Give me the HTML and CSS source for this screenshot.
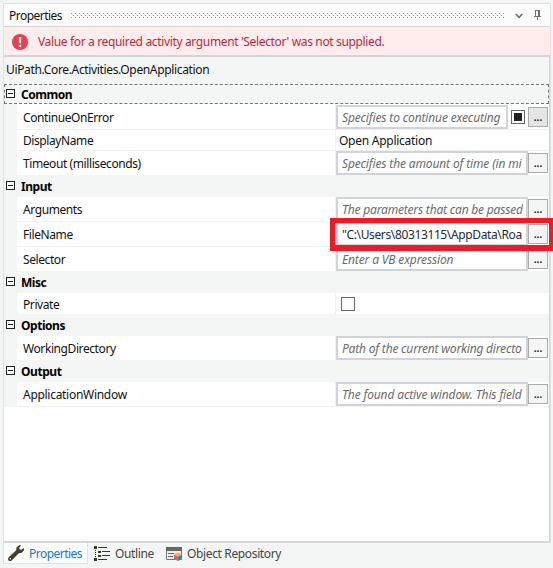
FILE: index.html
```
<!DOCTYPE html>
<html lang="en">
<head>
<meta charset="utf-8">
<title>Properties</title>
<link rel="stylesheet" href="styles.css">
</head>
<body>
<main class="panel">
  <header class="titlebar">
    <span class="title">Properties</span>
    <svg class="grip" width="164" height="5" shape-rendering="crispEdges"><defs><pattern id="dots" width="4" height="4" patternUnits="userSpaceOnUse"><path fill="#999" d="M0 0h1v1H0zM2 2h1v1H2z"/></pattern></defs><rect width="100%" height="5" fill="url(#dots)"/></svg>
    <svg class="chevron" width="8" height="6" viewBox="0 0 8 6"><path d="M.7 1 4 4.3 7.3 1" fill="none" stroke="#717171" stroke-width="1.7"/></svg>
    <svg class="pin" width="7" height="10" viewBox="0 0 7 10" shape-rendering="crispEdges"><path fill="#717171" d="M1 0h5v6h1v1H4v3H3V7H0V6h1zM2 1v5h2V1z" fill-rule="evenodd"/></svg>
  </header>
  <div class="error">
    <svg width="16" height="16" viewBox="0 0 16 16"><circle cx="8" cy="8" r="8" fill="#e9404d"/><path d="M6.7 3h2.6L9 9.2H7zM6.8 10.7h2.4v2.2H6.8z" fill="#fff"/></svg>
    <span class="error-text">Value for a required activity argument 'Selector' was not supplied.</span>
  </div>
  <div class="grid">
    <div class="type"><span>UiPath.Core.Activities.OpenApplication</span></div>
    <div class="group focused"><i class="toggle"></i><b>Common</b></div>
    <div class="row h26"><span class="name">ContinueOnError</span><div class="value"><div class="field"><em>Specifies to continue executing</em></div><i class="tristate"></i><button class="pressed">...</button></div></div>
    <div class="row h21"><span class="name">DisplayName</span><div class="value"><span class="plain">Open Application</span></div></div>
    <div class="row h24"><span class="name">Timeout (milliseconds)</span><div class="value"><div class="field"><em>Specifies the amount of time (in mi</em></div><button>...</button></div></div>
    <div class="group"><i class="toggle"></i><b>Input</b></div>
    <div class="row h25"><span class="name">Arguments</span><div class="value"><div class="field"><em class="tight">The parameters that can be passed</em></div><button>...</button></div></div>
    <div class="row h25 selected"><span class="name">FileName</span><div class="value"><div class="field"><span class="path">"C:\Users\80313115\AppData\Roa</span></div><button>...</button></div></div>
    <div class="row h24"><span class="name">Selector</span><div class="value"><div class="field"><em>Enter a VB expression</em></div><button>...</button></div></div>
    <div class="group"><i class="toggle"></i><b>Misc</b></div>
    <div class="row h21 last"><span class="name">Private</span><div class="value"><i class="check"></i></div></div>
    <div class="group"><i class="toggle"></i><b>Options</b></div>
    <div class="row h24"><span class="name">WorkingDirectory</span><div class="value"><div class="field"><em class="tight">Path of the current working directo</em></div><button>...</button></div></div>
    <div class="group"><i class="toggle"></i><b>Output</b></div>
    <div class="row h25"><span class="name wide">ApplicationWindow</span><div class="value"><div class="field"><em>The found active window. This field</em></div><button>...</button></div></div>
    <div class="empty"></div>
  </div>
</main>
<nav class="tabs">
  <div class="tab active">
    <svg width="16" height="16" viewBox="0 0 16 16"><path fill="#413e31" d="M11.6 0 8.5 2.2 8.2 5.200.7 12.200C-.3 13.500-.1 15 .9 15.700c.9.6 2.200.5 3-.4L10.800 8.300l3-.5L16 5.300V2.900l-2.700 1.900-1.800-.5-.3-1.700L13.300.600z"/><circle cx="2.300" cy="13.800" r=".7" fill="#fff"/></svg>
    <span>Properties</span>
  </div>
  <div class="tab outline">
    <svg width="16" height="15" viewBox="0 0 16 15" shape-rendering="crispEdges"><path fill="#37372e" d="M0 0h3v3H0zM4 1h9v1H4zM1 4h1v1H1zM1 6h1v1H1zM1 8h1v1H1zM1 10h1v1H1zM4 5h3v2H4zM8 5h8v1H8zM4 9h3v2H4zM8 9h8v1H8zM0 12h3v3H0zM4 13h9v1H4z"/></svg>
    <span>Outline</span>
  </div>
  <div class="tab repo">
    <svg width="16" height="14" viewBox="0 0 16 14"><path fill="#eee" stroke="#777" d="M.5 3.5h15v9H.5z"/><path fill="#666" d="M0 0h16v4H0z"/><path stroke="#666" d="M2 6.5h6M2 9.5h5"/><path fill="#ed6340" d="m8 7.500 4 2V14l-4-2z"/><path fill="#f4af65" d="m8 7.500 4-2 4 2-4 2z"/><path fill="#318bb6" d="m12 9.500 4-2V12l-4 2z"/></svg>
    <span>Object Repository</span>
  </div>
</nav>
</body>
</html>
```
FILE: styles.css
```
*, *::after { box-sizing: border-box; }
body {
  position: relative;
  margin: 0;
  width: 553px;
  height: 568px;
  overflow: hidden;
  padding: 3px 2px 0 3px;
  background: #f4f6f6;
  color: #111;
  font: 12px/16px "Noto Sans", sans-serif;
}
span, em, b { white-space: nowrap; }
svg { display: block; flex: none; }
.panel {
  width: 548px;
  height: 540px;
  border: 1px solid #dfe2e4;
  border-bottom: 2px solid #d5d7d8;
  display: flex;
  flex-direction: column;
}
.titlebar {
  height: 23px;
  flex: none;
  background: #fcfcfc;
  border-bottom: 1px solid #d3d5d7;
  display: flex;
  align-items: center;
  padding: 0 9px 0 5px;
}
.title { width: 62px; letter-spacing: -.52px; padding-top: 2px; }
.grip { flex: 1; width: auto; }
.chevron { margin-left: 10px; margin-top: 1px; }
.pin { margin-left: 11px; margin-top: -1px; }
.error {
  height: 30px;
  flex: none;
  background: #ffecec;
  border-bottom: 2px solid #d3d4d8;
  display: flex;
  align-items: center;
  gap: 10px;
  padding: 1px 0 0 8px;
  color: #b62b40;
}
.error-text { letter-spacing: -.35px; padding-top: 1px; }
.grid {
  flex: 1;
  min-height: 0;
  display: flex;
  flex-direction: column;
  border-right: 1px solid #d3d5d7;
}
.type { height: 27px; flex: none; padding: 5px 2px; letter-spacing: -.35px; }
.group {
  height: 22px;
  flex: none;
  display: flex;
  align-items: center;
  gap: 6px;
  padding-left: 2px;
}
.group b { letter-spacing: -.45px; color: #000; padding-top: 2px; }
.group.focused { height: 20px; border: 1px dashed #777; padding-left: 1px; }
.toggle {
  width: 9px;
  height: 9px;
  border: 1px solid #222;
  background: linear-gradient(#222, #222) center / 5px 1px no-repeat #fff;
  margin-top: -1px;
}
.row {
  flex: none;
  margin-left: 13px;
  background: #fff;
  display: grid;
  grid-template-columns: 319px 1fr;
  border-bottom: 1px solid #f1f3f3;
}
.h21 { height: 21px; }
.h24 { height: 24px; }
.h25 { height: 25px; }
.h26 { height: 26px; }
.h24, .last { border-bottom: 0; }
.name { align-self: center; padding: 2px 0 0 6px; letter-spacing: -.41px; }
.name.wide { letter-spacing: -.29px; }
.value {
  display: flex;
  align-items: center;
  border-left: 1px solid #f1f3f3;
  margin-left: -1px;
  min-width: 0;
  padding-right: 1px;
}
.field {
  flex: 1;
  min-width: 0;
  height: 24px;
  border: 2px solid #d1d3d9;
  padding: 3px 3px 0 4px;
  background: #fff;
  overflow: hidden;
}
.field > * { display: block; overflow: hidden; }
em { color: #6b6b6b; letter-spacing: -.14px; }
.tight { letter-spacing: -.19px; }
.path { letter-spacing: -.37px; color: #222b38; }
button {
  width: 20px;
  height: 20px;
  flex: none;
  padding: 0;
  border: 1px solid #aaa;
  border-radius: 0;
  background: #f4f6f6;
  color: #222;
  font: bold 10px/18px "Noto Sans", sans-serif;
}
.pressed { background: #e5e5e5; }
.plain { padding: 2px 0 0 3px; letter-spacing: -.26px; }
.tristate, .check { flex: none; width: 14px; height: 14px; border: 1px solid #666; }
.tristate { margin: 0 3px; background: linear-gradient(#222, #222) center / 8px 8px no-repeat #fff; }
.check { margin-left: 5px; }
.selected { position: relative; }
.selected::after {
  content: "";
  position: absolute;
  left: 313px;
  top: -4px;
  width: 223px;
  height: 33px;
  border: 5px solid #ed1c24;
  border-width: 5px 4px 6px 5px;
}
.empty { flex: 1; background: #fff; }
.tabs { display: flex; height: 21px; color: #444; }
.tab { display: flex; align-items: center; gap: 5px; }
.tab span { letter-spacing: -.36px; padding-top: 1px; }
.active { width: 85px; padding-left: 4px; background: #fbfcfc; border: 1px solid #dfe2e3; border-top: 0; color: #1976d2; }
.tab.active span { letter-spacing: -.52px; }
.outline { width: 75px; padding-left: 6px; }
.repo { padding-left: 3px; }
```
